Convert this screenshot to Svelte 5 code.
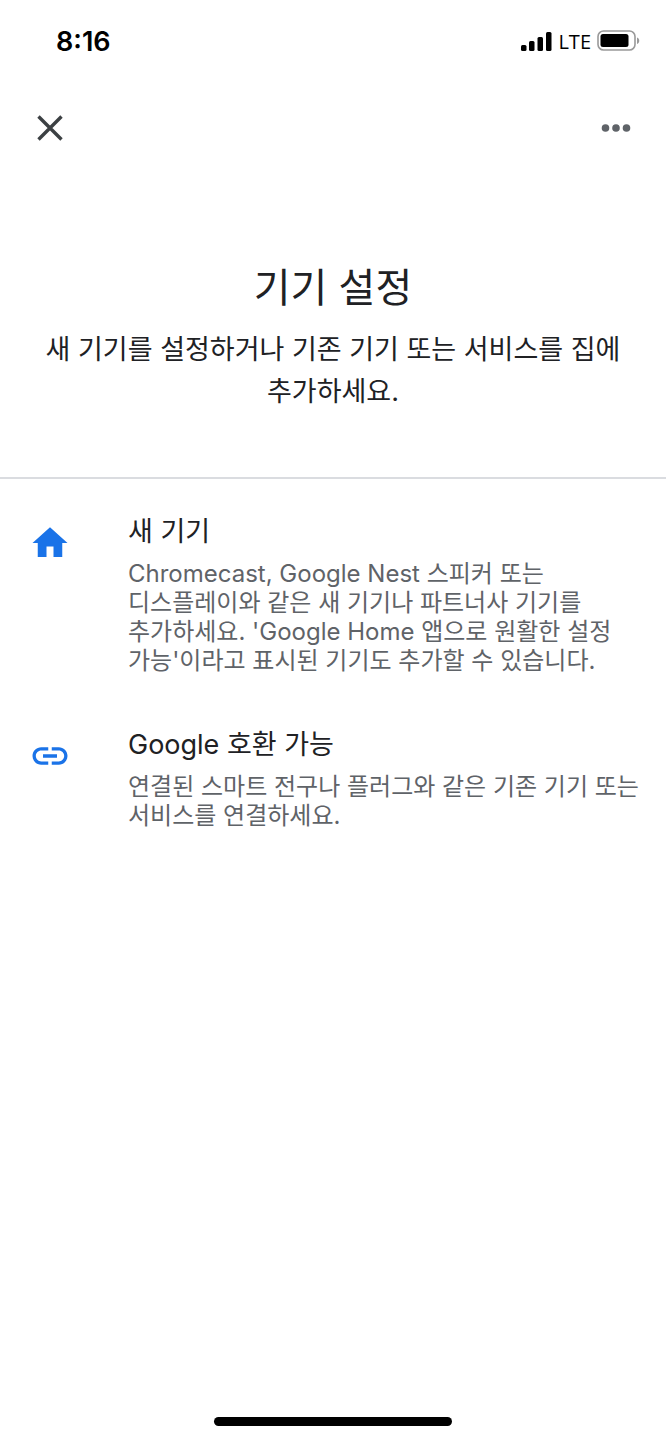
<script lang="ts">
	type Option = {
		icon: string;
		title: string;
		description: string;
	};

	const icons: Record<string, string> = {
		home: 'M10 20v-6h4v6h5v-8h3L12 3 2 12h3v8z',
		link: 'M3.9 12c0-1.71 1.39-3.1 3.1-3.1h4V7H7c-2.76 0-5 2.24-5 5s2.24 5 5 5h4v-1.9H7c-1.71 0-3.1-1.39-3.1-3.1zM8 13h8v-2H8v2zm9-6h-4v1.9h4c1.71 0 3.1 1.39 3.1 3.1s-1.39 3.1-3.1 3.1h-4V17h4c2.76 0 5-2.24 5-5s-2.24-5-5-5z'
	};

	const options: Option[] = [
		{
			icon: 'home',
			title: '새 기기',
			description:
				"Chromecast, Google Nest 스피커 또는 디스플레이와 같은 새 기기나 파트너사 기기를 추가하세요. 'Google Home 앱으로 원활한 설정 가능'이라고 표시된 기기도 추가할 수 있습니다."
		},
		{
			icon: 'link',
			title: 'Google 호환 가능',
			description: '연결된 스마트 전구나 플러그와 같은 기존 기기 또는 서비스를 연결하세요.'
		}
	];
</script>

<div class="screen">
	<div class="status-bar">
		<span class="time">8:16</span>
		<div class="status-icons">
			<svg width="31" height="20" viewBox="0 0 31 20" aria-hidden="true">
				<rect x="0" y="14" width="5.500" height="6" rx="1.5" />
				<rect x="8" y="10" width="5.500" height="10" rx="1.5" />
				<rect x="16.500" y="6" width="5.500" height="14" rx="1.5" />
				<rect x="25" y="1" width="5.500" height="19" rx="1.5" />
			</svg>
			<span class="network">LTE</span>
			<svg width="43" height="22" viewBox="0 0 43 22" aria-hidden="true">
				<rect x="1" y="1" width="37" height="19" rx="5.5" fill="none" stroke="#999" stroke-width="1.6" />
				<rect x="3.5" y="4" width="28" height="13" rx="2.5" />
				<path d="M40 7.500c3 1 3 5.500 0 6.500z" fill="#999" />
			</svg>
		</div>
	</div>

	<header class="toolbar">
		<button aria-label="닫기">
			<svg width="28" height="28" viewBox="0 0 28 28" aria-hidden="true">
				<path d="M2.500 2.500l23 23M25.500 2.500l-23 23" stroke="#3c4043" stroke-width="3.400" />
			</svg>
		</button>
		<button aria-label="더보기">
			<svg width="30" height="10" viewBox="0 0 30 10" fill="#5f6368" aria-hidden="true">
				<circle cx="4.500" cy="5" r="3.800" />
				<circle cx="15" cy="5" r="3.800" />
				<circle cx="25.500" cy="5" r="3.800" />
			</svg>
		</button>
	</header>

	<section class="intro">
		<h1>기기 설정</h1>
		<p>새 기기를 설정하거나 기존 기기 또는 서비스를 집에 추가하세요.</p>
	</section>

	<main class="options">
		{#each options as option}
			<button class="option">
				<svg class="option-icon" viewBox="0 0 24 24" aria-hidden="true">
					<path d={icons[option.icon]} />
				</svg>
				<span class="option-text">
					<span class="option-title">{option.title}</span>
					<span class="option-description">{option.description}</span>
				</span>
			</button>
		{/each}
	</main>

	<div class="home-indicator"></div>
</div>

<style>
	:global(body) {
		margin: 0;
		background: #fff;
	}

	.screen {
		display: flex;
		flex-direction: column;
		min-height: 100vh;
		color: #202124;
		font-family: Inter, 'Noto Sans CJK KR', sans-serif;
		word-break: keep-all;
	}

	button {
		padding: 0;
		border: 0;
		background: none;
		color: inherit;
		font: inherit;
		cursor: pointer;
	}

	svg {
		display: block;
	}

	.status-bar {
		display: flex;
		justify-content: space-between;
		align-items: center;
		height: 82px;
		padding: 0 26px 0 56px;
		color: #000;
	}

	.time {
		font-size: 27px;
		font-weight: 600;
	}

	.status-icons {
		display: flex;
		align-items: center;
		gap: 6px;
	}

	.network {
		font-family: 'Open Sans', sans-serif;
		font-size: 20px;
	}

	.toolbar {
		display: flex;
		justify-content: space-between;
		align-items: center;
		height: 92px;
		padding: 0 35px 0 36px;
	}

	.intro {
		padding: 84px 40px 64px;
		border-bottom: 2px solid #dadce0;
		text-align: center;
	}

	h1 {
		margin: 0;
		font-size: 40px;
		font-weight: 400;
		line-height: 60px;
	}

	.intro p {
		margin: 11px 0 0;
		font-size: 27px;
		line-height: 42px;
	}

	.options {
		display: flex;
		flex-direction: column;
		flex: 1;
		gap: 49px;
		padding: 32px 20px 40px 29px;
	}

	.option {
		display: flex;
		align-items: flex-start;
		gap: 57px;
		text-align: left;
	}

	.option-icon {
		flex: none;
		width: 42px;
		height: 42px;
		margin-top: 11px;
		fill: #1a73e8;
	}

	.option-text {
		display: flex;
		flex-direction: column;
		gap: 6px;
	}

	.option-title {
		font-size: 27px;
		line-height: 42px;
	}

	.option-description {
		color: #5f6368;
		font-size: 24px;
		line-height: 29px;
	}

	.home-indicator {
		width: 238px;
		height: 9px;
		margin: 0 auto 14px;
		border-radius: 5px;
		background: #000;
	}
</style>
